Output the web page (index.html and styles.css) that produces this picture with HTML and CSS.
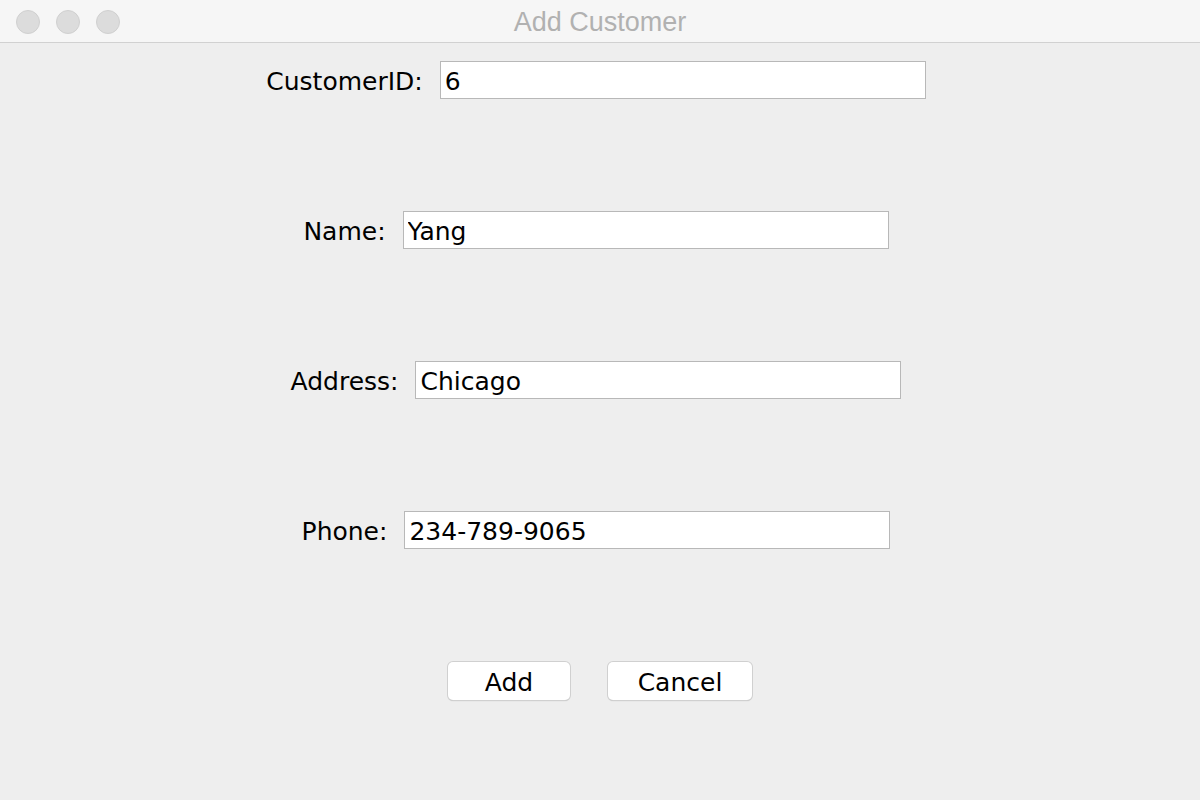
FILE: index.html
```html
<!DOCTYPE html>
<html lang="en">
<head>
    <meta charset="UTF-8">
    <title>Add Customer</title>
    <link rel="stylesheet" href="styles.css">
</head>
<body>
    <div class="window">
        <!-- Title bar -->
        <div class="titlebar">
            <div class="lights">
                <span class="light"></span>
                <span class="light"></span>
                <span class="light"></span>
            </div>
            <div class="title">Add Customer</div>
        </div>

        <div class="content">
            <div class="row">
                <label class="label">CustomerID:</label>
                <input class="field" type="text" value="6">
            </div>
            <div class="row">
                <label class="label">Name:</label>
                <input class="field" type="text" value="Yang">
            </div>
            <div class="row">
                <label class="label">Address:</label>
                <input class="field" type="text" value="Chicago">
            </div>
            <div class="row">
                <label class="label">Phone:</label>
                <input class="field" type="text" value="234-789-9065">
            </div>
            <div class="buttons">
                <button class="btn btn-add">Add</button>
                <button class="btn btn-cancel">Cancel</button>
            </div>
        </div>
    </div>
</body>
</html>
```

FILE: styles.css
```css
body {
    margin: 0;
    padding: 0;
    background: #eeeeee;
    font-family: 'DejaVu Sans', sans-serif;
}

.window {
    width: 1200px;
    height: 800px;
    background: #eeeeee;
    display: flex;
    flex-direction: column;
    overflow: hidden;
}

/* Title bar */
.titlebar {
    height: 42px;
    background: #f6f6f6;
    border-bottom: 1px solid #d1d1d1;
    position: relative;
    display: flex;
    align-items: center;
    justify-content: center;
    flex-shrink: 0;
}

.lights {
    position: absolute;
    left: 16px;
    top: 10px;
    display: flex;
    gap: 16px;
}

.light {
    width: 24px;
    height: 24px;
    border-radius: 50%;
    background: #dcdcdc;
    border: 1px solid #d0d0d0;
    box-sizing: border-box;
}

.title {
    font-family: 'Liberation Sans', Arial, sans-serif;
    font-size: 27px;
    color: #b1b1b1;
    margin-top: 2px;
}

/* Form */
.content {
    padding-top: 18px;
    display: flex;
    flex-direction: column;
    gap: 112px;
}

.row {
    display: flex;
    justify-content: center;
    align-items: center;
    gap: 17px;
    height: 38px;
    padding-right: 8px;
}

.label {
    font-size: 25px;
    color: #000;
    padding-top: 2px;
}

.field {
    width: 486px;
    height: 38px;
    box-sizing: border-box;
    border: 1px solid #b8b8b8;
    background: #fff;
    padding: 3px 4px 0;
    font-family: 'DejaVu Sans', sans-serif;
    font-size: 25px;
    color: #000;
    outline: none;
}

.buttons {
    display: flex;
    justify-content: center;
    gap: 38px;
    height: 38px;
    margin-top: 1px;
}

.btn {
    height: 38px;
    background: #fff;
    border: none;
    border-radius: 5px;
    box-shadow: 0 0 0 1px #d0d0d0, 0 1px 1px rgba(0, 0, 0, 0.25);
    font-family: 'DejaVu Sans', sans-serif;
    font-size: 25px;
    color: #000;
    padding: 2px 0 0;
}

.btn-add {
    width: 122px;
}

.btn-cancel {
    width: 144px;
}
```
